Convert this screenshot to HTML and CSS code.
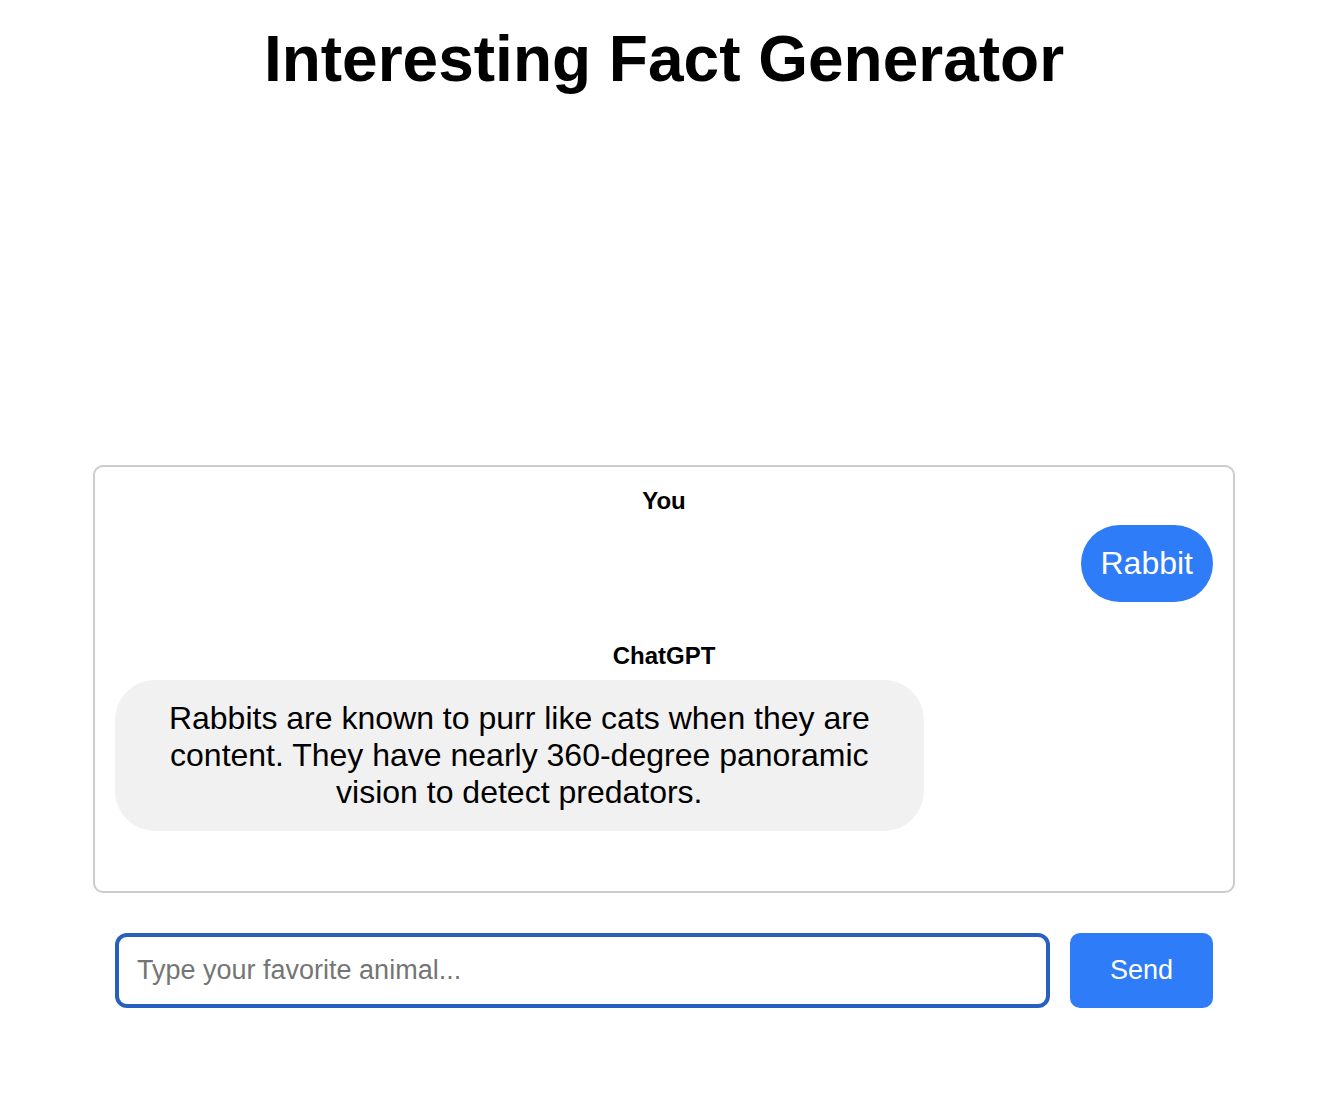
FILE: index.html
```
<!DOCTYPE html>
<html lang="en">
<head>
  <meta charset="utf-8">
  <meta name="viewport" content="width=device-width, initial-scale=1">
  <title>Interesting Fact Generator</title>
  <link rel="stylesheet" href="styles.css">
</head>
<body>
  <main class="app">
    <h1 class="title">Interesting Fact Generator</h1>
    <section class="chat">
      <article class="message message-user">
        <h2 class="sender">You</h2>
        <p class="bubble">Rabbit</p>
      </article>
      <article class="message message-bot">
        <h2 class="sender">ChatGPT</h2>
        <p class="bubble">Rabbits are known to purr like cats when they are content. They have nearly 360-degree panoramic vision to detect predators.</p>
      </article>
    </section>
    <form class="composer">
      <input class="composer-input" type="text" placeholder="Type your favorite animal..." aria-label="Favorite animal">
      <button class="composer-send" type="button">Send</button>
    </form>
  </main>
</body>
</html>
```

FILE: styles.css
```
* {
  box-sizing: border-box;
}

body {
  margin: 0;
  background: #fff;
  color: #000;
  font-family: "Liberation Sans", Arial, sans-serif;
  font-size: 32px;
  text-align: center;
}

.app {
  display: flex;
  flex-direction: column;
  min-height: 100vh;
  padding: 22px 105px 88px 93px;
}

.title {
  margin: 0 0 auto;
  font-size: 64px;
  line-height: 74px;
}

.chat {
  padding: 20px 20px 60px;
  border: 2px solid #ccc;
  border-radius: 10px;
}

.message {
  display: flex;
  flex-direction: column;
}

.message + .message {
  margin-top: 40px;
}

.sender {
  margin: 0 0 10px;
  font-size: 24px;
  line-height: 28px;
}

.bubble {
  box-sizing: content-box;
  max-width: 70%;
  margin: 0;
  padding: 20px;
  border-radius: 40px;
  line-height: 37px;
}

.message-user .bubble {
  align-self: flex-end;
  background: #2f7cf8;
  color: #fff;
}

.message-bot .bubble {
  align-self: flex-start;
  background: #f1f1f1;
}

.composer {
  display: flex;
  gap: 20px;
  margin: 40px 22px 0;
}

.composer-input,
.composer-send {
  height: 75px;
  border-radius: 10px;
  font: inherit;
  font-size: 27px;
}

.composer-input {
  flex: 1;
  min-width: 0;
  padding: 0 18px;
  border: 4px solid #2860bd;
  border-radius: 12px;
  background: #fff;
  outline: none;
}

.composer-input::placeholder {
  color: #757575;
}

.composer-send {
  padding: 0 40px;
  border: 0;
  background: #2f7cf8;
  color: #fff;
}
```
